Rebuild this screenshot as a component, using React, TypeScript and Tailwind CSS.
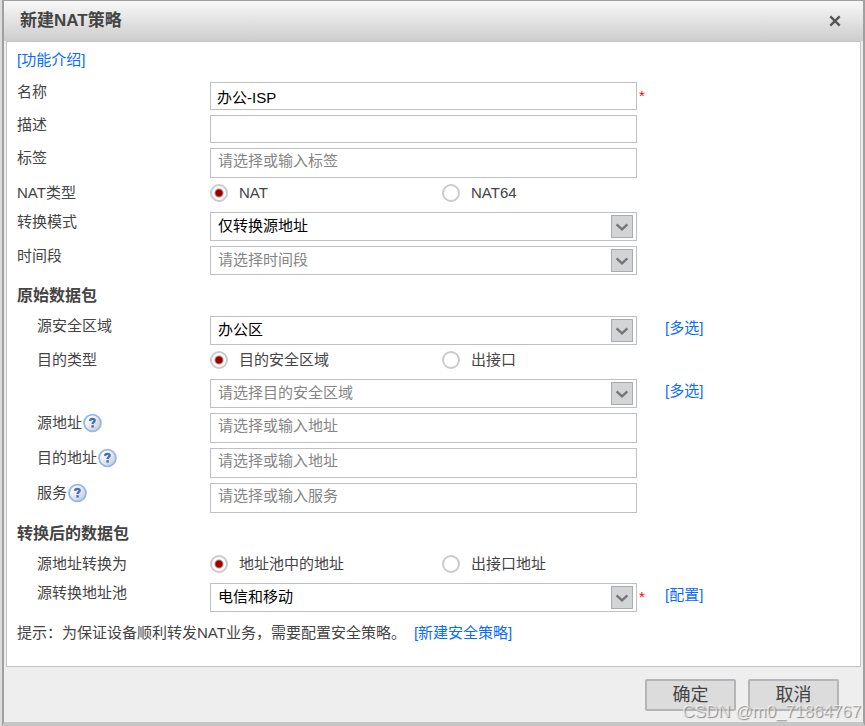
import React, { useState } from "react";

type fieldRowProps = {
  label?: React.ReactNode;
  htmlFor?: string;
  indent?: boolean;
  required?: boolean;
  link?: string;
  children: React.ReactNode;
};

const FieldRow = ({
  label,
  htmlFor,
  indent,
  required,
  link,
  children,
}: fieldRowProps) => {
  return (
    <div className="grid grid-cols-[193px_minmax(0,427px)_28px_auto] items-start">
      <label
        htmlFor={htmlFor}
        className={`flex items-center leading-5 ${indent ? "pl-5" : ""}`}
      >
        {label}
      </label>
      {children}
      <span className="pl-0.5 leading-7 text-[#ff0000]">
        {required ? "*" : ""}
      </span>
      {link && (
        <a href="#" className="leading-6 text-[#0a6cff]">
          {link}
        </a>
      )}
    </div>
  );
};

const HelpIcon = () => (
  <svg width="20" height="20" viewBox="0 0 20 20" aria-hidden="true">
    <defs>
      <linearGradient id="help" x1="0" y1="0" x2="1" y2="1">
        <stop offset="0.2" stopColor="#ffffff" />
        <stop offset="1" stopColor="#bfc3ca" />
      </linearGradient>
    </defs>
    <circle cx="10.5" cy="10" r="8.4" fill="url(#help)" stroke="#94b6f0" strokeWidth="1.8" />
    <path
      d="M8 7.8C8.1 6.5 9.1 5.9 10.4 5.9c1.4 0 2.3.6 2.3 1.7 0 1.6-2.1 1.6-2.1 3.4"
      fill="none"
      stroke="#3f6fbd"
      strokeWidth="2.3"
    />
    <rect x="9.4" y="12.2" width="2.4" height="2.4" fill="#3f6fbd" />
  </svg>
);

type textProps = {
  id: string;
  value?: string;
};

const TextField = ({ id, value }: textProps) => (
  <input
    id={id}
    type="text"
    defaultValue={value}
    className="h-7 w-full border border-[#bfc0c4] bg-white px-1.5 text-black outline-none"
  />
);

const TagField = ({ id, placeholder }: { id: string; placeholder: string }) => (
  <input
    id={id}
    type="text"
    placeholder={placeholder}
    className="h-[30px] w-full border border-[#bfc0c4] bg-white px-[7px] pb-1.5 outline-none placeholder:text-[#858585]"
  />
);

type selectProps = {
  id: string;
  option: string;
  empty?: boolean;
  ariaLabel?: string;
};

const SelectField = ({ id, option, empty, ariaLabel }: selectProps) => (
  <div className="relative">
    <select
      id={id}
      aria-label={ariaLabel}
      className={`block h-[29px] w-full appearance-none border border-[#bfc0c4] bg-white pr-8 pl-[7px] outline-none ${
        empty ? "text-[#858585]" : "text-black"
      }`}
    >
      <option>{option}</option>
    </select>
    <span className="pointer-events-none absolute top-[3px] right-1 flex h-[23px] w-[22px] items-center justify-center border border-[#a9abb0] bg-[#d3d4d6]">
      <svg width="14" height="9" viewBox="0 0 14 9" className="mt-0.5" aria-hidden="true">
        <path d="M1.6 1.4L7 6.4l5.4-5" fill="none" stroke="#737579" strokeWidth="2.3" />
      </svg>
    </span>
  </div>
);

type radioProps = {
  name: string;
  options: string[];
};

const RadioGroup = ({ name, options }: radioProps) => {
  const [selected, setSelected] = useState<string>(options[0]);
  return (
    <div role="radiogroup" className="flex h-6 items-start">
      {options.map((option) => (
        <label key={option} className="flex w-[232px] shrink-0 items-center gap-[11px] leading-5">
          <input
            type="radio"
            name={name}
            checked={selected === option}
            onChange={() => setSelected(option)}
            className="h-[18px] w-[18px] appearance-none rounded-full border-2 border-[#cbcbcb] bg-white checked:bg-[radial-gradient(circle,#990000_3px,#ffffff_5px)]"
          />
          {option}
        </label>
      ))}
    </div>
  );
};

const SectionTitle = ({ children }: { children: React.ReactNode }) => (
  <h2 className="pt-px text-[16px] leading-[30px] font-bold">{children}</h2>
);

const App = () => {
  return (
    <div className="relative min-h-screen bg-[#dcdcdc] pl-0.5 font-['Liberation_Sans','Noto_Sans_CJK_SC',sans-serif] text-[15px] text-[#444]">
      <div className="flex min-h-screen flex-col border-x-2 border-t border-b-4 border-[#a0a0a0] border-b-[#c6c6c6] bg-[#eeeeee]">
        <header className="flex h-10 items-center justify-between bg-linear-to-b from-[#f8f8f8] to-[#cdcdcd] pr-[22px] pl-4">
          <h1 className="text-[17px] font-bold">新建NAT策略</h1>
          <button aria-label="关闭">
            <svg width="12" height="12" viewBox="0 0 12 12">
              <path d="M1.3 1.3l9.4 9.4M10.7 1.3l-9.4 9.4" stroke="#555" strokeWidth="2.4" />
            </svg>
          </button>
        </header>

        <main className="mx-0.5 flex flex-col gap-[5px] border border-[#c4c4c4] bg-white pt-1 pb-[18px] pl-2.5">
          <div className="pb-[3px] leading-7">
            <a href="#" className="text-[#0a6cff]">
              [功能介绍]
            </a>
          </div>
          <FieldRow label="名称" htmlFor="name" required>
            <TextField id="name" value="办公-ISP" />
          </FieldRow>
          <FieldRow label="描述" htmlFor="desc">
            <TextField id="desc" />
          </FieldRow>
          <FieldRow label="标签" htmlFor="tag">
            <TagField id="tag" placeholder="请选择或输入标签" />
          </FieldRow>
          <FieldRow label="NAT类型">
            <RadioGroup name="natType" options={["NAT", "NAT64"]} />
          </FieldRow>
          <FieldRow label="转换模式" htmlFor="mode">
            <SelectField id="mode" option="仅转换源地址" />
          </FieldRow>
          <FieldRow label="时间段" htmlFor="time">
            <SelectField id="time" option="请选择时间段" empty />
          </FieldRow>

          <SectionTitle>原始数据包</SectionTitle>
          <FieldRow label="源安全区域" htmlFor="srcZone" indent link="[多选]">
            <SelectField id="srcZone" option="办公区" />
          </FieldRow>
          <FieldRow label="目的类型" indent>
            <RadioGroup name="destType" options={["目的安全区域", "出接口"]} />
          </FieldRow>
          <FieldRow htmlFor="destZone" link="[多选]">
            <SelectField id="destZone" option="请选择目的安全区域" empty ariaLabel="目的安全区域" />
          </FieldRow>
          <FieldRow label={<>源地址<HelpIcon /></>} htmlFor="srcAddr" indent>
            <TagField id="srcAddr" placeholder="请选择或输入地址" />
          </FieldRow>
          <FieldRow label={<>目的地址<HelpIcon /></>} htmlFor="destAddr" indent>
            <TagField id="destAddr" placeholder="请选择或输入地址" />
          </FieldRow>
          <FieldRow label={<>服务<HelpIcon /></>} htmlFor="service" indent>
            <TagField id="service" placeholder="请选择或输入服务" />
          </FieldRow>

          <SectionTitle>转换后的数据包</SectionTitle>
          <FieldRow label="源地址转换为" indent>
            <RadioGroup name="srcTo" options={["地址池中的地址", "出接口地址"]} />
          </FieldRow>
          <FieldRow label="源转换地址池" htmlFor="pool" indent required link="[配置]">
            <SelectField id="pool" option="电信和移动" />
          </FieldRow>
          <p className="leading-[31px]">
            提示：为保证设备顺利转发NAT业务，需要配置安全策略。
            <a href="#" className="ml-2 text-[#0a6cff]">
              [新建安全策略]
            </a>
          </p>
        </main>

        <footer className="flex justify-end gap-3 pt-3 pr-6 pb-2 text-[18px]">
          <button className="h-8 w-[91px] rounded-xs border-2 border-[#b4b5b9] bg-[#dcdcdc]">
            确定
          </button>
          <button className="h-8 w-[91px] rounded-xs border-2 border-[#b4b5b9] bg-[#dcdcdc]">
            取消
          </button>
        </footer>
      </div>
      <span className="pointer-events-none absolute right-1 bottom-1 text-[17px] leading-5 text-white/60 [text-shadow:1px_1px_1px_#888]">
        CSDN @m0_71864767
      </span>
    </div>
  );
};

export default App;
